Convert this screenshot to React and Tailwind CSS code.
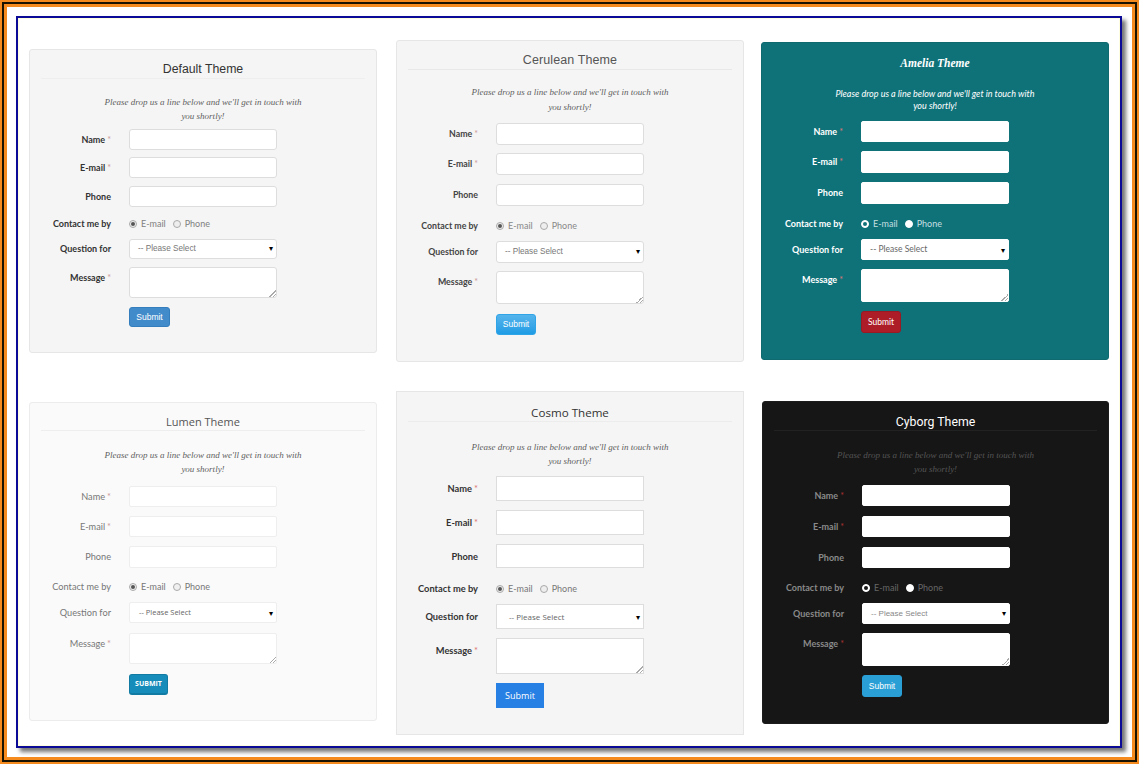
const grip = "[&::-webkit-resizer]:bg-[linear-gradient(135deg,transparent_50%,#aaa_50%,#aaa_60%,transparent_60%,transparent_75%,#aaa_75%,#aaa_85%,transparent_85%)] [&::-webkit-resizer]:bg-no-repeat [&::-webkit-resizer]:bg-right-bottom [&::-webkit-resizer]:bg-[length:7px_7px]";

const themes = {
  default: {
    name: "Default Theme",
    card: "w-[348px] h-[304px] pt-[10px] bg-[#f5f5f5] border-[#e6e6e6] rounded-[3px]",
    title: "h-[19px] leading-[19px] text-[12.3px] text-[#333] border-[#eeeeee] font-['Liberation_Sans',sans-serif]",
    intro: "mt-[16px] mb-[6px] text-[9px] leading-[14px] text-[#5f5f5f] font-['Liberation_Serif',serif] italic",
    label: "text-[9px] text-[#333] font-bold",
    lh: "leading-[21px]",
    selLh: "leading-[19px]",
    rows: ["h-[21px]", "mt-[7px] h-[21px]", "mt-[8px] h-[21px]", "mt-[10px] h-[14px]", "mt-[8px] h-[20px]", "mt-[8px] h-[31px]", "mt-[9px] h-[20px]"],
    control: "border-[#dddddd] rounded-[3px]",
    radio: "border-[#aaa] bg-[#eee]",
    dot: "bg-[#555]",
    radioText: "text-[#808080]",
    select: "pl-[8px] text-[8.2px] text-[#777] font-['Liberation_Sans',sans-serif]",
    button: "w-[41px] bg-[#428bca] border-[#357ebd] rounded-[3px] text-white font-['Liberation_Sans',sans-serif] text-[8.5px]",
    submit: "Submit",
    star: "text-[#c99]",
  },
  cerulean: {
    name: "Cerulean Theme",
    card: "w-[348px] h-[322px] pt-[10px] bg-[#f5f5f5] border-[#e6e6e6] rounded-[3px]",
    title: "h-[19px] leading-[18px] text-[12.5px] tracking-[0.1px] text-[#555] border-[#e8e8e8] font-['Liberation_Sans',sans-serif]",
    intro: "mt-[15px] mb-[8px] text-[9px] leading-[15px] text-[#5f5f5f] font-['Liberation_Serif',serif] italic",
    label: "text-[8.8px] text-[#444] font-bold",
    lh: "leading-[22px]",
    selLh: "leading-[21px]",
    rows: ["h-[22px]", "mt-[8px] h-[22px]", "mt-[9px] h-[22px]", "mt-[13px] h-[14px]", "mt-[8px] h-[22px]", "mt-[8px] h-[33px]", "mt-[10px] h-[21px]"],
    control: "border-[#dddddd] rounded-[3px]",
    radio: "border-[#aaa] bg-[#eee]",
    dot: "bg-[#555]",
    radioText: "text-[#888]",
    select: "pl-[8px] text-[8.2px] text-[#777] font-['Liberation_Sans',sans-serif]",
    button: "w-[40px] bg-gradient-to-b from-[#54b4eb] to-[#1d9ce5] border-[#2fa4e7] rounded-[3px] text-white font-['Liberation_Sans',sans-serif] text-[8.5px]",
    submit: "Submit",
    star: "text-[#c99]",
  },
  amelia: {
    name: "Amelia Theme",
    card: "w-[348px] h-[318px] pt-[11px] bg-[#0f7279] border-[#0f6a70] rounded-[3px]",
    title: "h-[19px] leading-[18px] text-[11.5px] text-white border-transparent font-['Liberation_Serif',serif] italic font-bold",
    intro: "mt-[15px] mb-[9px] text-[9px] leading-[12px] text-white font-['Lato',sans-serif] italic",
    label: "text-[9px] text-white font-bold",
    lh: "leading-[21px]",
    selLh: "leading-[21px]",
    rows: ["h-[21px]", "mt-[9px] h-[22px]", "mt-[9px] h-[22px]", "mt-[13px] h-[14px]", "mt-[8px] h-[21px]", "mt-[9px] h-[33px]", "mt-[9px] h-[22px]"],
    control: "border-white rounded-[2px]",
    radio: "border-white bg-white",
    dot: "bg-[#0f7279]",
    radioText: "text-[#c5dfe0]",
    select: "pl-[8px] text-[8.5px] text-[#666] font-['Lato',sans-serif]",
    button: "w-[40px] bg-[#ad1d28] border-[#9a1a24] rounded-[3px] text-white font-['Lato',sans-serif] text-[8.5px]",
    submit: "Submit",
    star: "text-[#d77]",
  },
  lumen: {
    name: "Lumen Theme",
    card: "w-[348px] h-[319px] pt-[11px] bg-[#fafafa] border-[#ececec] rounded-[3px]",
    title: "h-[17px] leading-[16px] text-[11px] text-[#555] border-[#eeeeee] font-['Open_Sans',sans-serif]",
    intro: "mt-[17px] mb-[10px] text-[9px] leading-[14px] text-[#5f5f5f] font-['Liberation_Serif',serif] italic",
    label: "text-[9.2px] text-[#777]",
    lh: "leading-[21px]",
    selLh: "leading-[21px]",
    rows: ["h-[21px]", "mt-[9px] h-[21px]", "mt-[9px] h-[22px]", "mt-[12px] h-[14px]", "mt-[8px] h-[21px]", "mt-[10px] h-[31px]", "mt-[10px] h-[21px]"],
    control: "border-[#eeeeee] rounded-[2px]",
    radio: "border-[#aaa] bg-[#f0f0f0]",
    dot: "bg-[#555]",
    radioText: "text-[#777]",
    select: "pl-[9px] text-[7.5px] text-[#666] font-['Open_Sans',sans-serif]",
    button: "w-[39px] bg-[#158cba] border-[#127ba3] border-b-2 rounded-[3px] text-white font-['Open_Sans',sans-serif] text-[7px] font-bold",
    submit: "SUBMIT",
    star: "text-[#c99]",
  },
  cosmo: {
    name: "Cosmo Theme",
    card: "w-[348px] h-[344px] pt-[11px] bg-[#f5f5f5] border-[#e6e6e6]",
    title: "h-[19px] leading-[19px] text-[11.6px] text-[#333] border-[#ececec] font-['Open_Sans',sans-serif]",
    intro: "mt-[18px] mb-[8px] text-[9px] leading-[14px] text-[#5f5f5f] font-['Liberation_Serif',serif] italic",
    label: "text-[9.3px] text-[#333] font-bold",
    lh: "leading-[25px]",
    selLh: "leading-[25px]",
    rows: ["h-[25px]", "mt-[9px] h-[25px]", "mt-[9px] h-[24px]", "mt-[14px] h-[14px]", "mt-[8px] h-[25px]", "mt-[9px] h-[36px]", "mt-[9px] h-[25px]"],
    control: "border-[#dddddd]",
    radio: "border-[#aaa] bg-[#eee]",
    dot: "bg-[#555]",
    radioText: "text-[#777]",
    select: "pl-[12px] text-[8px] text-[#666] font-['Open_Sans',sans-serif]",
    button: "w-[48px] bg-[#2780e3] border-[#2780e3] text-white font-['Open_Sans',sans-serif] text-[9px]",
    submit: "Submit",
    star: "text-[#d77]",
  },
  cyborg: {
    name: "Cyborg Theme",
    card: "w-[347px] ml-[1px] h-[323px] pt-[12px] bg-[#161616] border-[#1c1c1c] rounded-[3px]",
    title: "h-[17px] leading-[17px] text-[12.3px] text-white border-[#222222] font-['Roboto',sans-serif]",
    intro: "mt-[17px] mb-[9px] text-[9px] leading-[14px] text-[#555] font-['Liberation_Serif',serif] italic",
    label: "text-[9px] text-[#8a8a8a] font-bold",
    lh: "leading-[21px]",
    selLh: "leading-[21px]",
    rows: ["h-[21px]", "mt-[10px] h-[21px]", "mt-[10px] h-[21px]", "mt-[13px] h-[14px]", "mt-[8px] h-[21px]", "mt-[9px] h-[33px]", "mt-[9px] h-[22px]"],
    control: "border-white rounded-[2px]",
    radio: "border-white bg-white",
    dot: "bg-[#161616]",
    radioText: "text-[#666]",
    select: "pl-[8px] text-[8px] text-[#888] font-['Liberation_Sans',sans-serif]",
    button: "w-[40px] bg-[#2a9fd6] border-[#2a9fd6] rounded-[3px] text-white font-['Liberation_Sans',sans-serif] text-[8.5px]",
    submit: "Submit",
    star: "text-[#a33]",
  },
};

function Row({ t, i, label, req, children }) {
  const lh = i === 3 ? "leading-[14px]" : i === 4 ? t.selLh : t.lh;
  return (
    <div className={`flex items-start ${t.rows[i]}`}>
      <div className={`w-[81px] mr-[18px] shrink-0 text-right whitespace-nowrap font-['Lato',sans-serif] ${t.label} ${lh}`}>
        {label}
        {req && <span className={`ml-[2px] font-normal ${t.star}`}>*</span>}
      </div>
      {children}
    </div>
  );
}

function Radio({ t, checked, text }) {
  return (
    <span className={`flex items-center gap-[4px] text-[9px] font-['Lato',sans-serif] ${t.radioText}`}>
      <span className={`flex items-center justify-center w-[8px] h-[8px] rounded-full border ${t.radio}`}>
        {checked && <span className={`block w-[4px] h-[4px] rounded-full ${t.dot}`} />}
      </span>
      {text}
    </span>
  );
}

function Card({ t, className }) {
  return (
    <div className={`border ${t.card} ${className || ""}`}>
      <div className={`mx-[11px] text-center border-b ${t.title}`}>{t.name}</div>
      <p className={`text-center ${t.intro}`}>
        Please drop us a line below and we'll get in touch with
        <br />
        you shortly!
      </p>
      <Row t={t} i={0} label="Name" req>
        <input className={`w-[148px] h-full border bg-white ${t.control}`} />
      </Row>
      <Row t={t} i={1} label="E-mail" req>
        <input className={`w-[148px] h-full border bg-white ${t.control}`} />
      </Row>
      <Row t={t} i={2} label="Phone">
        <input className={`w-[148px] h-full border bg-white ${t.control}`} />
      </Row>
      <Row t={t} i={3} label="Contact me by">
        <div className="flex items-center gap-[7px] h-full">
          <Radio t={t} checked text="E-mail" />
          <Radio t={t} text="Phone" />
        </div>
      </Row>
      <Row t={t} i={4} label="Question for">
        <div className={`relative flex items-center w-[148px] h-full border bg-white ${t.control} ${t.select}`}>
          -- Please Select
          <span className="absolute right-[3px] top-1/2 -translate-y-1/2 text-[8px] text-black">▾</span>
        </div>
      </Row>
      <Row t={t} i={5} label="Message" req>
        <textarea className={`block w-[148px] h-full border bg-white ${grip} ${t.control}`} />
      </Row>
      <div className={`flex ${t.rows[6]}`}>
        <button className={`ml-[99px] h-full border flex items-center justify-center ${t.button}`}>{t.submit}</button>
      </div>
    </div>
  );
}

export default function App() {
  return (
    <div className="w-[1139px] h-[764px] overflow-hidden bg-[#f58a1f] p-[2px]">
      <div className="h-full border-2 border-[#1a1200] bg-[#f58a1f] p-[3px]">
        <div className="h-full bg-white pt-[9px] pl-[9px]">
          <div className="w-[1106px] h-[732px] border-2 border-[#0a0a96] shadow-[4px_4px_4px_#777] bg-white">
            <div className="h-full border border-[#fffde0] flex pl-[10px]">
              <div className="flex flex-col pt-[30px]">
                <Card t={themes.default} />
                <Card t={themes.lumen} className="mt-[49px]" />
              </div>
              <div className="flex flex-col pt-[21px] ml-[19px]">
                <Card t={themes.cerulean} />
                <Card t={themes.cosmo} className="mt-[29px]" />
              </div>
              <div className="flex flex-col pt-[23px] ml-[17px]">
                <Card t={themes.amelia} />
                <Card t={themes.cyborg} className="mt-[41px]" />
              </div>
            </div>
          </div>
        </div>
      </div>
    </div>
  );
}
